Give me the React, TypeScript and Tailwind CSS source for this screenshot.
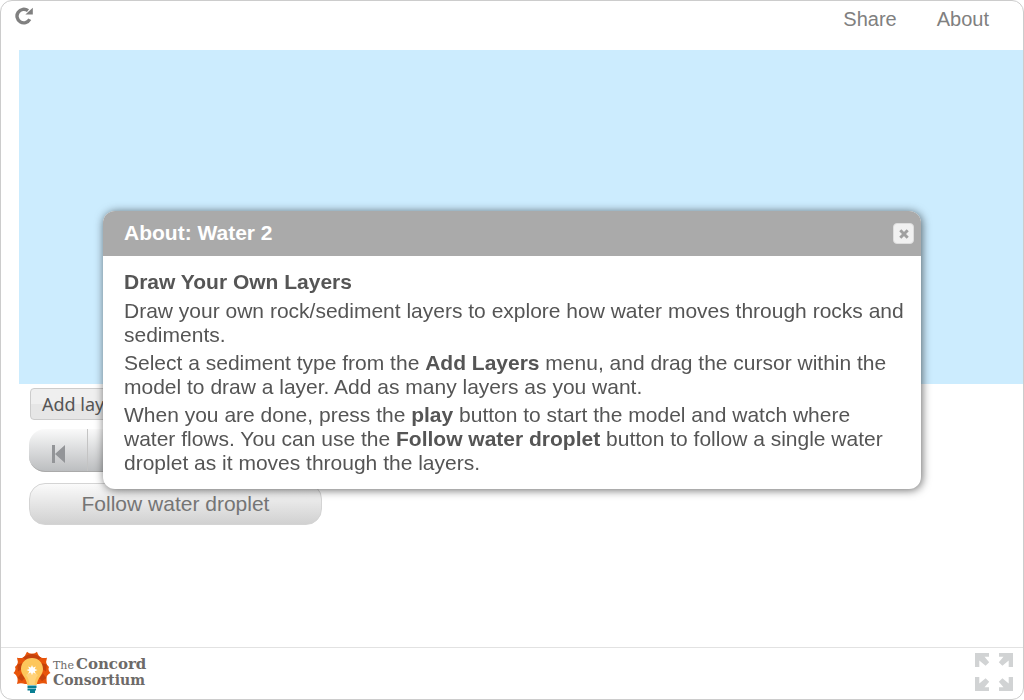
import React, { useState } from 'react';

function ReloadIcon() {
  return (
    <svg viewBox="0 0 18 18" className="size-[18px]" aria-hidden="true">
      <path d="M14.800 12.300A6.800 6.800 0 1 1 13 3.700" fill="none" stroke="#808080" strokeWidth="3.400" />
      <path d="M17.800 .8v6.800h-7.400z" fill="#808080" />
    </svg>
  );
}

function CloseIcon() {
  return (
    <svg viewBox="0 0 10 10" className="size-[10px]" aria-hidden="true">
      <path d="M1.300 1.300l7.400 7.400M8.700 1.300l-7.400 7.400" stroke="#a0a0a0" strokeWidth="3" />
    </svg>
  );
}

function RewindIcon() {
  return (
    <svg viewBox="0 0 14 20" className="h-5 w-3.5" aria-hidden="true">
      <path d="M1 1h3v18H1zM14 1v18L4 10z" fill="#939598" />
    </svg>
  );
}

function FullscreenIcon() {
  const arrow = 'M0 0h14v3.800H9.500l4.700 5.400-3.600 3.600-6.300-5.300V14H0z';
  return (
    <svg viewBox="0 0 38 38" className="size-[38px]" aria-hidden="true">
      <g fill="#d1d3d4">
        <path d={arrow} />
        <path d={arrow} transform="translate(38 0) scale(-1 1)" />
        <path d={arrow} transform="translate(0 38) scale(1 -1)" />
        <path d={arrow} transform="translate(38 38) scale(-1 -1)" />
      </g>
    </svg>
  );
}

function BulbLogo() {
  return (
    <svg viewBox="0 0 38 42" className="h-[42px] w-[38px] shrink-0" aria-hidden="true">
      <path
        d="M14 .8Q16 2.800 19 2.800T24 .8Q25.500 5.500 28 6.500T34 6.800Q32.500 11 33.800 13.500L36 16Q34.500 19 37.500 22Q33.500 24 33.500 27T34 33Q30 31.500 26 33H12Q8 31.500 4 33Q5 30 4.500 27T.500 22Q3.500 19 2 16L4.200 13.500Q5.500 11 4 6.800Q8 7.500 10 6.500T14 .8z"
        fill="#e8540a"
      />
      <path
        d="M10 6.500L14.500 4 19 2.800 23.500 4 28 6.500 24.500 10h-11zM4.200 13.500L10 12l-1.500 6-3.500 2.500zM33.800 13.500L28 12l1.500 6 3.500 2.500zM4.500 27L8 22.500l4 4.500-3 3zM33.500 27L30 22.500 26 27l3 3z"
        fill="#c5420c"
      />
      <path
        d="M19 7C12.500 7 8 11.800 8 18c0 6.300 5.500 8.500 6.200 16h9.600c.7-7.500 6.200-9.700 6.200-16C30 11.800 25.500 7 19 7z"
        fill="#fdc65b"
      />
      <path d="M19 19l-6 5c2 2 3 5 3.500 10h5c.5-5 1.500-8 3.500-10z" fill="#ffd27a" />
      <path
        d="M19 14l1.100 2.600 2.800-1.200-1.200 2.600 2.800 1.100-2.800 1.100 1.200 2.600-2.800-1.200L19 24.200l-1.100-2.600-2.800 1.200 1.200-2.600-2.800-1.100 2.800-1.100-1.200-2.600 2.800 1.200z"
        fill="#fff"
      />
      <path d="M14.500 34.500h9V37h-9zM14.500 37.500h8.500v2h-1v2.500h-5v-2.500h-2.500z" fill="#087f93" />
    </svg>
  );
}

export default function App() {
  const [open, setOpen] = useState(true);

  return (
    <div className="flex min-h-screen flex-col overflow-hidden rounded-xl border border-[#ccc] bg-white font-['Liberation_Sans',Arial,sans-serif] text-[21px] leading-6 text-[#555]">
      <header className="flex h-[49px] items-start justify-between pt-1.5 pr-[34px] pl-3.5 text-xl leading-6 text-[#808080]">
        <button type="button" aria-label="Reload">
          <ReloadIcon />
        </button>
        <nav className="flex gap-10">
          <a href="#share">Share</a>
          <a href="#about">About</a>
        </nav>
      </header>

      <main className="flex grow flex-col">
        <div className="ml-[18px] h-[334px] bg-[#ccecfe]" />
        <div className="flex flex-col items-start pt-1 pl-7">
          <button
            type="button"
            className="ml-px h-8 w-36 rounded-sm border border-[#ccc] bg-linear-to-b from-[#efefef] from-50% to-[#e6e6e6] to-50% pl-[11px] text-left font-['Noto_Sans',sans-serif] text-lg text-[#555]"
          >
            Add layers
          </button>
          <div className="mt-[9px] flex h-[43px] w-[220px] overflow-hidden rounded-2xl border-b border-[#aaa] bg-linear-to-b from-[#fafafa] to-[#bcbec0]">
            <button
              type="button"
              aria-label="Rewind"
              className="flex w-[59px] items-center justify-center border-r border-[#c4c4c4] pt-2"
            >
              <RewindIcon />
            </button>
            <button type="button" aria-label="Play" className="grow" />
          </div>
          <button
            type="button"
            className="mt-[11px] h-[42px] w-[293px] rounded-2xl border border-[#d4d4d4] bg-linear-to-b from-[#fafafa] to-[#d1d1d1] text-[#757575]"
          >
            Follow water droplet
          </button>
        </div>
      </main>

      <footer className="flex h-[52px] items-center justify-between border-t border-[#e2e2e2] pr-2.5 pb-1 pl-3">
        <a
          href="#concord"
          className="flex items-center gap-0.5 font-['DejaVu_Serif',serif] leading-3.5 text-[#6d6a68]"
        >
          <BulbLogo />
          <span className="flex flex-col text-[15px] leading-3.5 font-bold">
            <span className="flex items-baseline gap-0.5">
              <span className="text-[11px] leading-3.5 font-normal">The</span>
              <span>Concord</span>
            </span>
            <span className="text-sm leading-3.5">Consortium</span>
          </span>
        </a>
        <button type="button" aria-label="Full screen">
          <FullscreenIcon />
        </button>
      </footer>

      {open && (
        <div className="fixed inset-0 flex items-center justify-center px-[103px]">
          <section
            role="dialog"
            aria-labelledby="about-title"
            className="w-full overflow-hidden rounded-xl bg-white shadow-[1px_1px_10px_rgba(0,0,0,0.6)]"
          >
            <div className="flex h-[45px] items-center justify-between bg-[#aaa] pr-[7px] pl-[21px]">
              <h1 id="about-title" className="pb-0.5 font-bold text-white">
                About: Water 2
              </h1>
              <button
                type="button"
                aria-label="Close"
                onClick={() => setOpen(false)}
                className="flex size-[21px] items-center justify-center rounded-sm border border-[#ddd] bg-[#f1f1f1]"
              >
                <CloseIcon />
              </button>
            </div>
            <div className="flex flex-col gap-1 py-3.5 pr-4 pl-[21px]">
              <h2 className="pb-px font-bold">Draw Your Own Layers</h2>
              <p>
                Draw your own rock/sediment layers to explore how water moves through rocks and sediments.
              </p>
              <p>
                Select a sediment type from the <b>Add Layers</b> menu, and drag the cursor within the model to
                draw a layer. Add as many layers as you want.
              </p>
              <p>
                When you are done, press the <b>play</b> button to start the model and watch where water flows.
                You can use the <b>Follow water droplet</b> button to follow a single water droplet as it moves
                through the layers.
              </p>
            </div>
          </section>
        </div>
      )}
    </div>
  );
}
